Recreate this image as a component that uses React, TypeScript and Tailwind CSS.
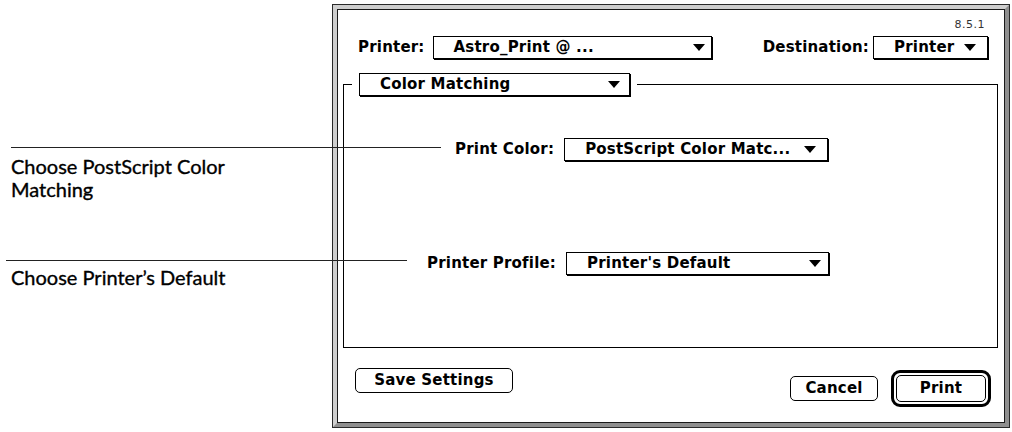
import React from "react";

// Classic Mac OS print dialog (Color Matching panel) with callout notes.

const chicago = "font-['DejaVu_Sans',sans-serif] font-bold text-[15px] tracking-[0.2px] text-black";

function Arrow(): React.ReactElement {
	return (
		<svg width="12" height="7" viewBox="0 0 12 7" className="shrink-0">
			<polygon points="0,0 12,0 6,7" fill="#000" />
		</svg>
	);
}

function PopUp({
	value,
	width,
	padRight,
}: {
	value: string;
	width: string;
	padRight: string;
}): React.ReactElement {
	return (
		<div
			className={`${width} ${padRight} h-[23px] shrink-0 flex items-center justify-between pl-[20px] bg-white border border-black shadow-[1px_1px_0_#000]`}
		>
			<span className={`${chicago} leading-none whitespace-nowrap`}>{value}</span>
			<Arrow />
		</div>
	);
}

function Label({ children }: { children: React.ReactNode }): React.ReactElement {
	return <span className={`${chicago} leading-none whitespace-nowrap`}>{children}</span>;
}

export default function App(): React.ReactElement {
	return (
		<div className="relative w-[1012px] h-[432px] bg-white flex overflow-hidden">
			{/* callout notes */}
			<div className="w-[332px] shrink-0 pl-[11px] pt-[155px] font-['Lato',sans-serif] text-[20px] leading-[23px] text-black [-webkit-text-stroke:0.35px_#000]">
				<p>
					Choose PostScript Color
					<br />
					Matching
				</p>
				<p className="mt-[65px]">Choose Printer’s Default</p>
			</div>

			{/* window frame */}
			<div className="mt-[4px] w-[678px] h-[424px] border border-[#2a2a2a]">
				<div className="h-full border-[4px] border-t-[#cfcfcf] border-l-[#cfcfcf] border-r-[#8f8f8f] border-b-[#8f8f8f]">
					<div className="h-full border border-[#1a1a1a] bg-white flex flex-col">
						<div className="h-[26px] flex justify-end pr-[19px] pt-[9px]">
							<span className="font-['DejaVu_Sans',sans-serif] text-[11px] leading-none tracking-[0.5px] text-[#333]">
								8.5.1
							</span>
						</div>

						<div className="flex items-center pl-[20px] pr-[16px]">
							<Label>Printer:</Label>
							<div className="ml-[8px]">
								<PopUp value="Astro_Print @ ..." width="w-[279px]" padRight="pr-[6px]" />
							</div>
							<div className="ml-auto flex items-center">
								<Label>Destination:</Label>
								<div className="ml-[4px]">
									<PopUp value="Printer" width="w-[115px]" padRight="pr-[11px]" />
								</div>
							</div>
						</div>

						<fieldset className="mt-[14px] ml-[5px] mr-[6px] h-[275px] border border-black">
							<legend className="ml-[8px] px-[7px] bg-white">
								<PopUp value="Color Matching" width="w-[271px]" padRight="pr-[9px]" />
							</legend>
							<div className="mt-[42px] pl-[111px] flex items-center">
								<Label>Print Color:</Label>
								<div className="ml-[10px]">
									<PopUp value="PostScript Color Matc..." width="w-[264px]" padRight="pr-[11px]" />
								</div>
							</div>
							<div className="mt-[91px] pl-[83px] flex items-center">
								<Label>Printer Profile:</Label>
								<div className="ml-[10px]">
									<PopUp value="Printer's Default" width="w-[263px]" padRight="pr-[7px]" />
								</div>
							</div>
						</fieldset>

						<div className="mt-[20px] pl-[17px] pr-[13px] flex items-start justify-between">
							<button
								type="button"
								className={`${chicago} w-[158px] h-[25px] border border-black rounded-[5px] bg-white leading-none`}
							>
								Save Settings
							</button>
							<div className="mt-[2px] flex items-center gap-[13px]">
								<button
									type="button"
									className={`${chicago} w-[88px] h-[25px] border border-black rounded-[5px] bg-white leading-none`}
								>
									Cancel
								</button>
								<div className="w-[100px] h-[37px] border-[3px] border-black rounded-[9px] p-[2px]">
									<button
										type="button"
										className={`${chicago} w-full h-full border border-black rounded-[5px] bg-white leading-none`}
									>
										Print
									</button>
								</div>
							</div>
						</div>
					</div>
				</div>
			</div>

			{/* callout leader lines */}
			<div className="absolute left-[11px] top-[147px] w-[430px] h-px bg-[#222]" />
			<div className="absolute left-[6px] top-[260px] w-[401px] h-px bg-[#222]" />
		</div>
	);
}
